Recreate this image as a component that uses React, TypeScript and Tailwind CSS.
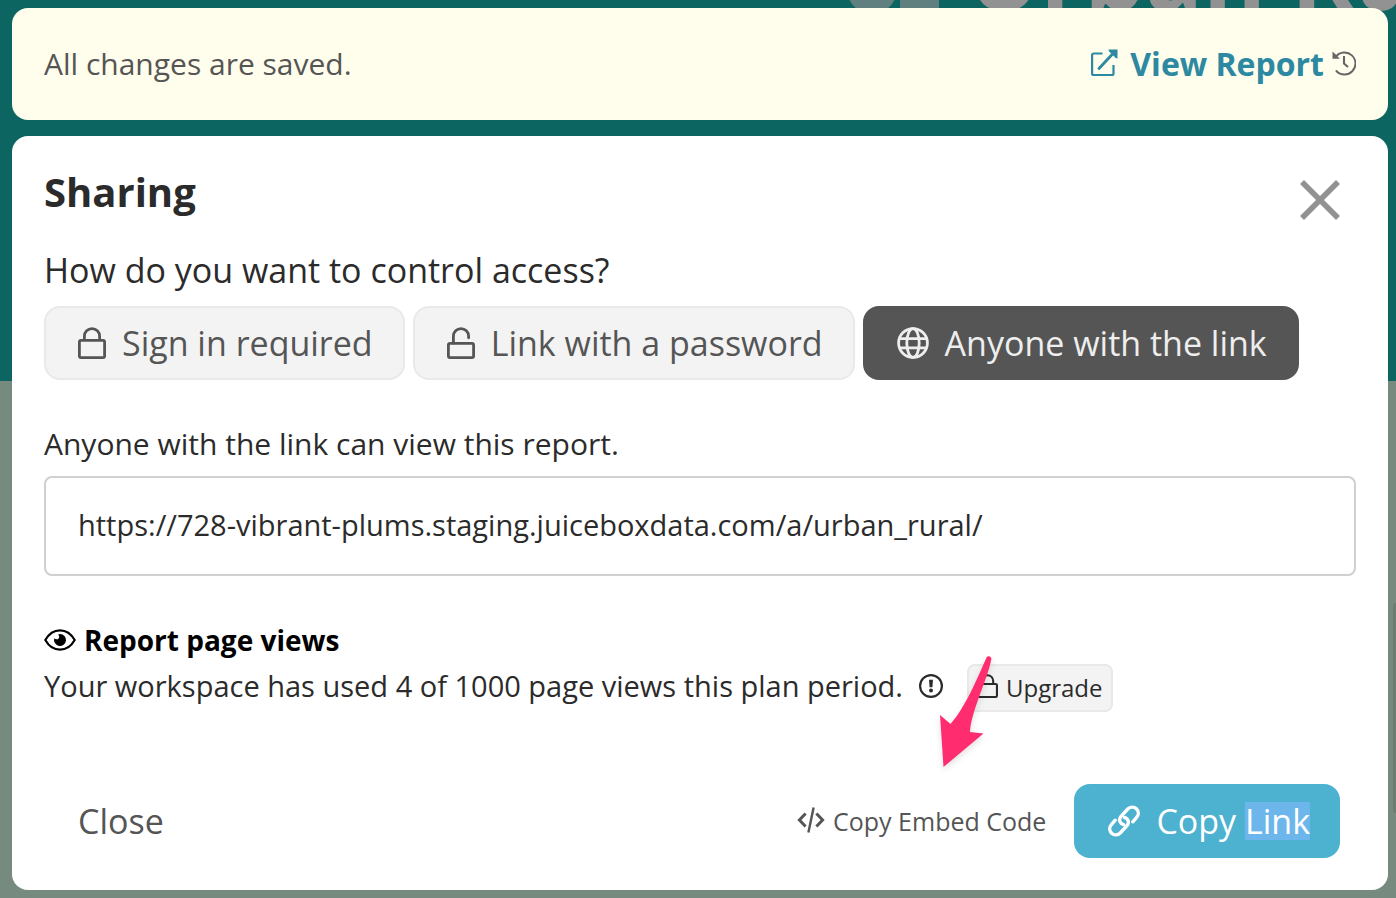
import type { ReactNode } from "react";

type IconProps = { className?: string };

function LockIcon({ className = "" }: IconProps) {
  return (
    <svg viewBox="0 0 28 32" className={className} fill="none" stroke="currentColor" strokeWidth="2.8" aria-hidden="true">
      <rect x="1.4" y="13.4" width="25.2" height="17.2" rx="1.6" />
      <path d="M6.4 13V9.2a7.6 7.6 0 0 1 15.2 0V13" />
    </svg>
  );
}

function UnlockIcon({ className = "" }: IconProps) {
  return (
    <svg viewBox="0 0 28 32" className={className} fill="none" stroke="currentColor" strokeWidth="2.8" aria-hidden="true">
      <rect x="1.4" y="16.4" width="25.2" height="14.2" rx="1.6" />
      <path d="M6.4 16V9.2a7.6 7.6 0 0 1 15.2 0v1.6" strokeLinecap="round" />
    </svg>
  );
}

function GlobeIcon({ className = "" }: IconProps) {
  return (
    <svg viewBox="0 0 32 32" className={className} fill="none" stroke="currentColor" strokeWidth="2.8" aria-hidden="true">
      <circle cx="16" cy="16" r="14.4" />
      <ellipse cx="16" cy="16" rx="6.2" ry="14.4" />
      <path d="M3 11.6h26M3 20.8h26" />
    </svg>
  );
}

function ExternalIcon({ className = "" }: IconProps) {
  return (
    <svg viewBox="0 0 27 28" className={className} fill="none" stroke="currentColor" strokeWidth="2.2" aria-hidden="true">
      <path d="M11.5 4.5H2.6a1.5 1.5 0 0 0-1.5 1.5V24.5a1.5 1.5 0 0 0 1.5 1.5H21a1.5 1.5 0 0 0 1.5-1.5V16" />
      <path d="M8 19.5 22 4.5" strokeWidth="2.8" strokeLinecap="round" />
      <path d="M17.5.5h9v9c-1.5 0-2.2-.8-3-1.7l-4-4c-1-.8-2-1.7-2-3.3z" fill="currentColor" stroke="none" />
    </svg>
  );
}

function HistoryIcon({ className = "" }: IconProps) {
  return (
    <svg viewBox="0 0 24 26" className={className} fill="none" stroke="currentColor" strokeWidth="1.9" aria-hidden="true">
      <path d="M4 6.5A11 11 0 1 1 4.4 21" strokeLinecap="round" />
      <path d="M.5 1.5 3.5 4.3 7.8 8.8H.5z" fill="currentColor" stroke="none" />
      <path d="M12 6v7.6l4 3.4" strokeWidth="2.1" />
    </svg>
  );
}

function CloseIcon({ className = "" }: IconProps) {
  return (
    <svg viewBox="0 0 40 40" className={className} fill="none" stroke="currentColor" strokeWidth="5.6" aria-hidden="true">
      <path d="M2 2 38 38M38 2 2 38" />
    </svg>
  );
}

function EyeIcon({ className = "" }: IconProps) {
  return (
    <svg viewBox="0 0 32 22" className={className} fill="none" stroke="currentColor" strokeWidth="2.2" aria-hidden="true">
      <path d="M1.3 11C5 4.500 10.2 1.3 16 1.3S27 4.500 30.7 11C27 17.500 21.8 20.7 16 20.7S5 17.500 1.3 11z" />
      <path d="M16 5a6 6 0 1 1-5.7 4.2c1 1.3 3.3 1.5 4.3.2 1-1.2.7-3-.5-4A6 6 0 0 1 16 5z" fill="currentColor" stroke="none" />
    </svg>
  );
}

function InfoIcon({ className = "" }: IconProps) {
  return (
    <svg viewBox="0 0 24 24" className={className} fill="none" stroke="currentColor" strokeWidth="2.2" aria-hidden="true">
      <circle cx="12" cy="12" r="10.9" />
      <path d="M10 5.8h4l-.6 7.4h-2.8z" fill="currentColor" stroke="none" />
      <circle cx="12" cy="16.6" r="2" fill="currentColor" stroke="none" />
    </svg>
  );
}

function CodeIcon({ className = "" }: IconProps) {
  return (
    <svg viewBox="0 0 28 28" className={className} fill="none" stroke="currentColor" strokeWidth="3" aria-hidden="true">
      <path d="M8.6 7.5 2.4 14l6.2 6.5M19.4 7.5l6.2 6.5-6.2 6.5" />
      <path d="M16.6 1.5 11.4 26.5" strokeWidth="2.4" />
    </svg>
  );
}

function ChainIcon({ className = "" }: IconProps) {
  return (
    <svg viewBox="0 0 32 32" className={className} fill="none" stroke="currentColor" strokeWidth="3.4" strokeLinecap="round" aria-hidden="true">
      <path d="M15.6 19.6c-4-1.2-5.3-5.3-2.4-8.4l6.6-7.2a6.1 6.1 0 0 1 8.6-.2c2.4 2.4 2.5 6.1.2 8.6l-3.8 4.4" />
      <path d="M16.4 12.4c4 1.2 5.3 5.3 2.4 8.4l-6.6 7.2a6.1 6.1 0 0 1-8.6.2c-2.4-2.4-2.5-6.1-.2-8.6l3.8-4.4" />
    </svg>
  );
}

function Arrow({ className = "" }: IconProps) {
  return (
    <svg viewBox="0 0 60 124" className={className} aria-hidden="true">
      <path
        d="M51.5 7.5c1.5-2.5 5.5-1 4.8 1.8C52.5 30 36.5 60 35 82L48.5 83.5 8.5 117 5 65 15.5 74C30 58 42.5 28 51.5 7.5z"
        fill="#ff2d6f"
      />
    </svg>
  );
}

function AccessButton({ selected = false, icon, children }: { selected?: boolean; icon: ReactNode; children: ReactNode }) {
  return (
    <button
      type="button"
      aria-pressed={selected}
      className={
        selected
          ? "flex h-[74px] items-center gap-4 rounded-2xl border-2 border-[#555555] bg-[#555555] pr-[30px] pl-8 text-[#eeeeee]"
          : "flex h-[74px] items-center gap-4 rounded-2xl border-2 border-[#e9e9e9] bg-[#f3f3f3] pr-[30px] pl-8 text-[#555555]"
      }
    >
      {icon}
      <span>{children}</span>
    </button>
  );
}

export default function App() {
  return (
    <div className="relative isolate min-h-screen overflow-hidden bg-[#768a7f] pt-2 pr-2 pb-2 pl-3 font-['Open_Sans',sans-serif] text-[34px] leading-10 text-[#2b2b2b]">
      <div className="absolute inset-x-0 top-0 -z-10 h-[381px] overflow-hidden bg-[#0c6561]">
        <div className="absolute -top-[75px] left-[846px] flex items-start gap-7 text-[#929292]">
          <svg viewBox="0 0 94 96" className="h-24 w-[94px] shrink-0" fill="#5f807e" aria-hidden="true">
            <circle cx="26" cy="64" r="25" />
            <rect x="54" y="0" width="39" height="96" />
          </svg>
          <p className="text-8xl leading-24 font-bold whitespace-nowrap">Urban Rural</p>
        </div>
      </div>
      <div className="absolute top-[603px] right-0 -z-10 h-[210px] w-[3px] rounded-l bg-[#6b7c71]" />

      <section className="flex h-28 items-center justify-between rounded-2xl bg-[#fffdeb] px-8">
        <p className="text-3xl leading-10 text-[#555555]">All changes are saved.</p>
        <div className="flex items-center gap-2">
          <a href="#report" className="flex items-center gap-3 text-[32px] font-bold text-[#2d89a1]">
            <ExternalIcon className="mb-[2px] h-7 w-[27px]" />
            View Report
          </a>
          <button type="button" aria-label="History" className="text-[#666666]">
            <HistoryIcon className="mb-[2px] h-[26px] w-6" />
          </button>
        </div>
      </section>

      <main className="mt-4 rounded-2xl bg-white px-8 pt-8 pb-8">
        <div className="flex items-start justify-between pr-4">
          <h1 className="text-[40px] leading-[48px] font-bold">Sharing</h1>
          <button type="button" aria-label="Close sharing" className="mt-3 text-[#929292]">
            <CloseIcon className="size-10" />
          </button>
        </div>

        <h2 className="mt-[30px]">How do you want to control access?</h2>
        <div className="mt-4 flex gap-2">
          <AccessButton icon={<LockIcon className="h-8 w-7" />}>Sign in required</AccessButton>
          <AccessButton icon={<UnlockIcon className="h-8 w-7" />}>Link with a password</AccessButton>
          <AccessButton selected icon={<GlobeIcon className="size-8" />}>Anyone with the link</AccessButton>
        </div>

        <label htmlFor="share-link" className="mt-11 block text-3xl leading-10">
          Anyone with the link can view this report.
        </label>
        <input
          id="share-link"
          readOnly
          defaultValue="https://728-vibrant-plums.staging.juiceboxdata.com/a/urban_rural/"
          className="mt-3 block h-[100px] w-full rounded-lg border-2 border-[#d0d0d0] bg-white px-8 pb-1 text-[29px] outline-none"
        />

        <h2 className="mt-11 flex items-center gap-2 text-[28px] font-bold text-black">
          <EyeIcon className="h-[22px] w-8" />
          Report page views
        </h2>
        <div className="relative mt-1 flex h-12 items-start">
          <p className="text-[29px] leading-[44px]">Your workspace has used 4 of 1000 page views this plan period.</p>
          <InfoIcon className="mt-[10px] ml-4 size-6" />
          <button type="button" className="ml-6 flex h-12 items-center gap-2 rounded-lg border-2 border-[#e9e9e9] bg-[#f3f3f3] px-2 text-2xl">
            <LockIcon className="mb-1 h-6 w-[21px]" />
            Upgrade
          </button>
          <Arrow className="absolute -top-[14px] left-[891px] h-[124px] w-[60px] drop-shadow-md" />
        </div>

        <div className="mt-[72px] flex items-center justify-between pr-4 text-[#555555]">
          <button type="button" className="px-[34px]">Close</button>
          <div className="flex items-center gap-7">
            <button type="button" className="flex items-center gap-2 text-[25px]">
              <CodeIcon className="mb-[2px] size-7" />
              Copy Embed Code
            </button>
            <button type="button" className="flex h-[74px] items-center gap-4 rounded-2xl bg-[#4db1d0] pr-[30px] pl-[34px] text-white">
              <ChainIcon className="size-8" />
              <span>
                Copy <span className="inline-block bg-[#6db6ec] leading-[38px]">Link</span>
              </span>
            </button>
          </div>
        </div>
      </main>
    </div>
  );
}
